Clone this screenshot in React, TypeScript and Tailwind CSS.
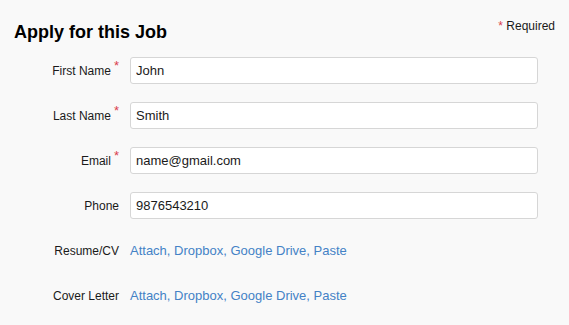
import React from "react";

type Field = {
  label: string;
  required?: boolean;
  value?: string;
  upload?: boolean;
};

const fields: Field[] = [
  { label: "First Name", required: true, value: "John" },
  { label: "Last Name", required: true, value: "Smith" },
  { label: "Email", required: true, value: "name@gmail.com" },
  { label: "Phone", value: "9876543210" },
  { label: "Resume/CV", upload: true },
  { label: "Cover Letter", upload: true },
];

const App: React.FC = () => {
  return (
    <div className="min-h-screen bg-[#f9f9f9] font-['Liberation_Sans',Arial,sans-serif] text-[#1a1a1a]">
      <div className="flex items-start justify-between pl-[14px] pr-[14px] pt-[18px]">
        <h2 className="mt-[3px] text-[18px] font-bold leading-[22px] text-black">
          Apply for this Job
        </h2>
        <div className="text-[12px] leading-[16px]">
          <span className="text-[#d9404e]">*</span> Required
        </div>
      </div>

      <div className="mt-[14px] flex flex-col gap-[18px] pr-[31px]">
        {fields.map((f) => (
          <div
            key={f.label}
            className="grid h-[27px] grid-cols-[119px_1fr] items-center gap-x-[11px]"
          >
            <label className="text-right text-[12px] leading-[16px] whitespace-nowrap">
              {f.label}
              {f.required && (
                <span className="ml-[3px] align-super text-[13px] leading-[0] text-[#d9404e]">
                  *
                </span>
              )}
            </label>
            {f.upload ? (
              <div className="text-[13px] leading-[16px] text-[#4482c6]">
                <a href="#">Attach</a>, <a href="#">Dropbox</a>,{" "}
                <a href="#">Google Drive</a>, <a href="#">Paste</a>
              </div>
            ) : (
              <input
                defaultValue={f.value}
                className="h-[27px] w-full rounded-[3px] border border-[#d6d6d6] bg-white px-[5px] text-[13px] text-[#1a1a1a] outline-none"
              />
            )}
          </div>
        ))}
      </div>
    </div>
  );
};

export default App;
